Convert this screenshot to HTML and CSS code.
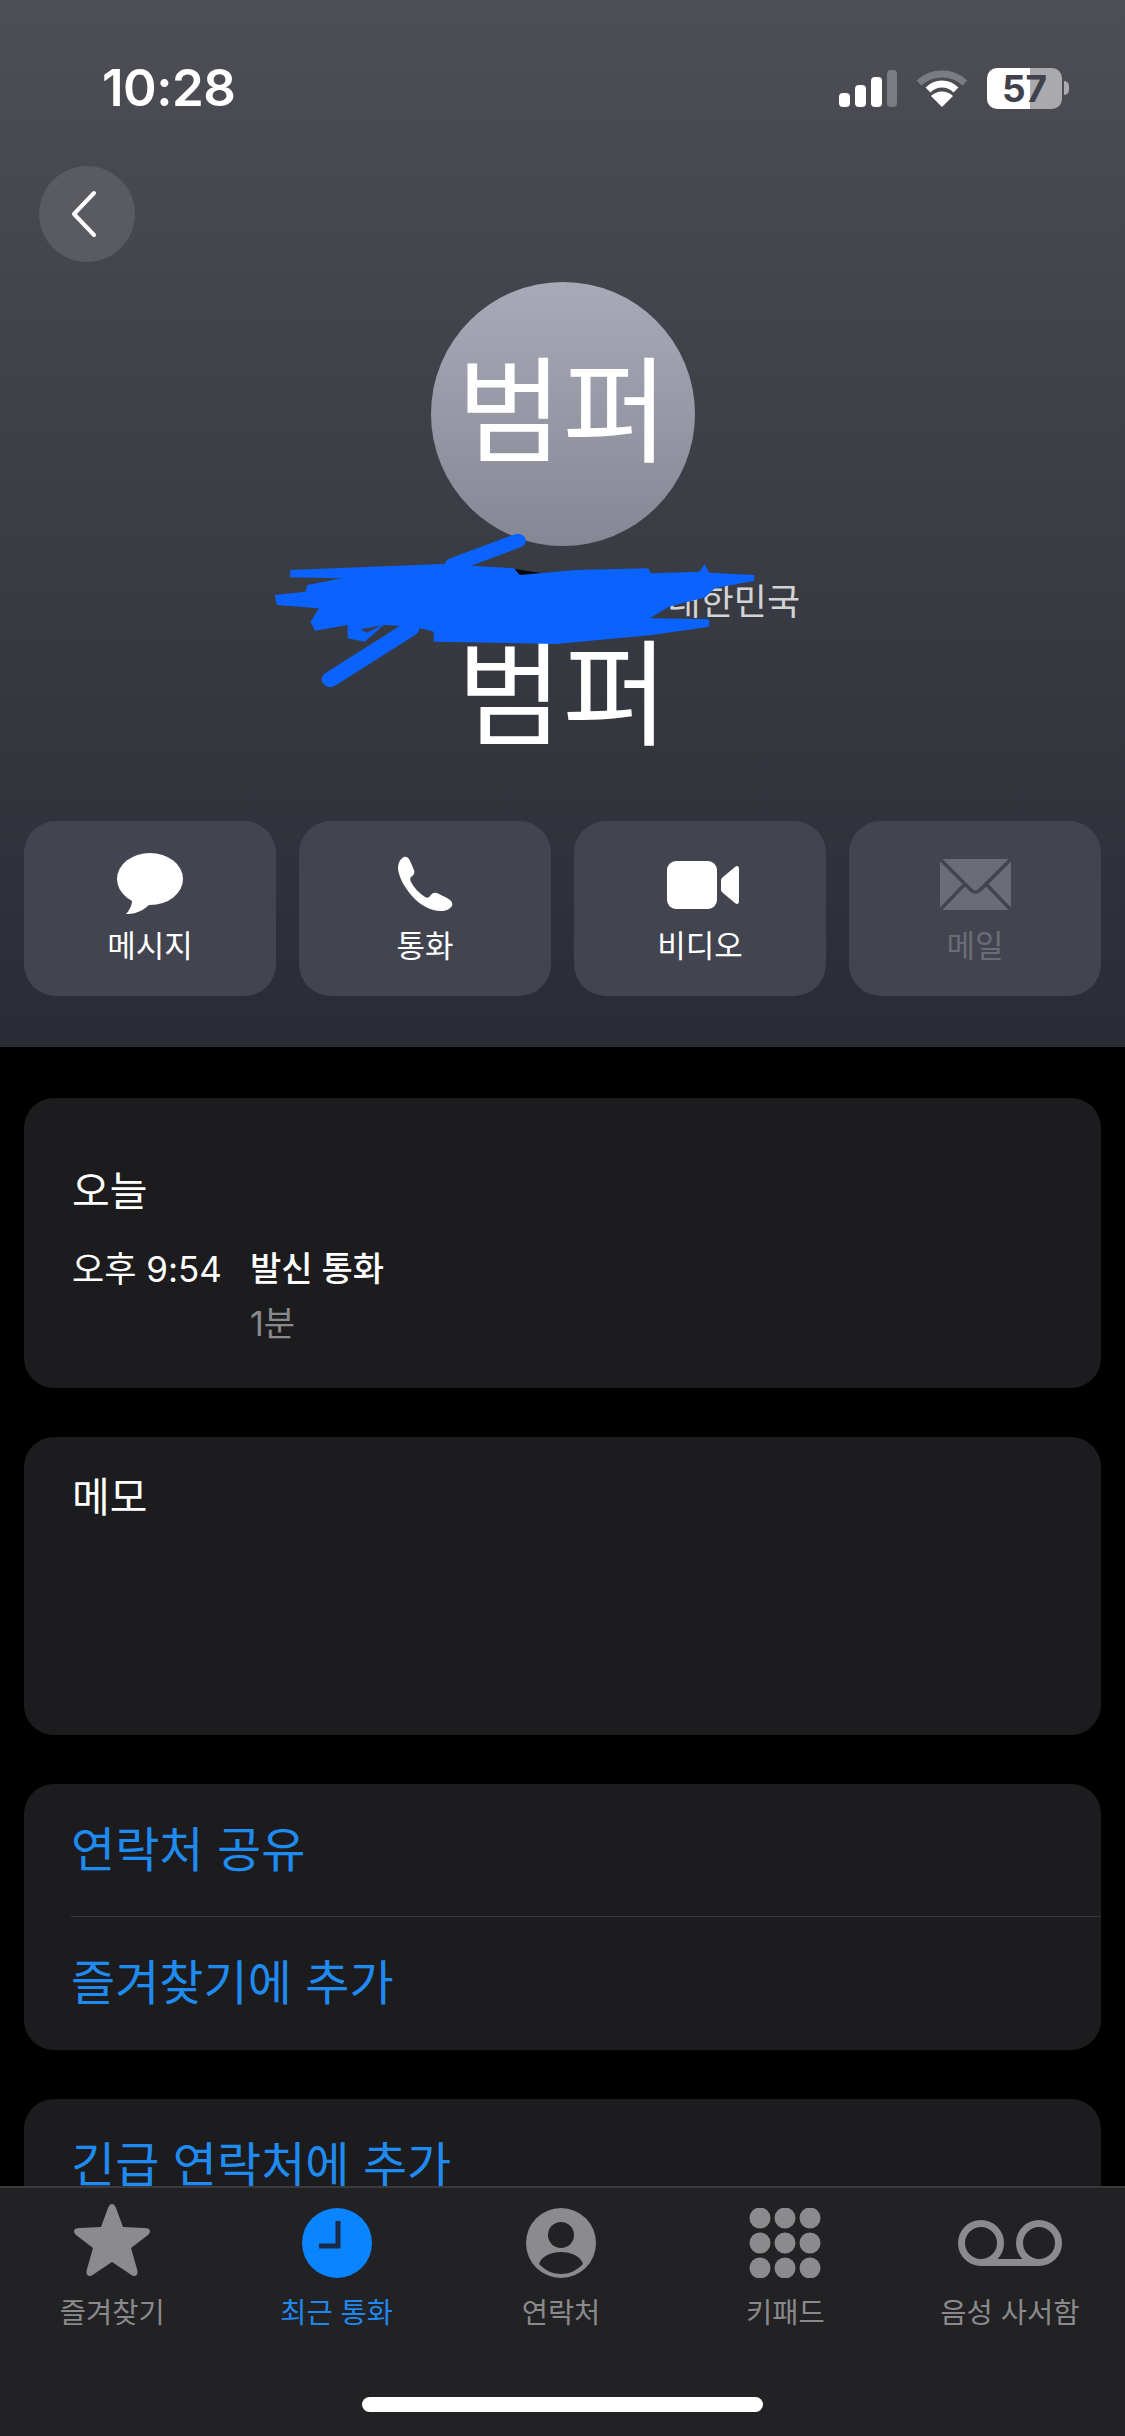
FILE: index.html
```html
<!DOCTYPE html>
<html lang="ko">
<head>
  <meta charset="UTF-8">
  <meta name="viewport" content="width=device-width, initial-scale=1.0">
  <title>범퍼</title>
  <link rel="stylesheet" href="styles.css">
</head>
<body>
  <div class="screen">

    <section class="hero">
      <div class="status">
        <span class="time">10:28</span>
        <div class="status-icons">
          <svg class="signal" viewBox="0 0 58 37">
            <rect x="0" y="23" width="11" height="14" rx="4" fill="#fff"/>
            <rect x="16" y="15" width="11" height="22" rx="4" fill="#fff"/>
            <rect x="32" y="7" width="11" height="30" rx="4" fill="#fff"/>
            <rect x="48" y="0" width="10" height="37" rx="4" fill="#7b7c81"/>
          </svg>
          <svg class="wifi" viewBox="0 0 52 37">
            <path d="M3 13 C16 1 36 1 49 13" fill="none" stroke="#7b7c81" stroke-width="7"/>
            <path d="M12 20 C20 12 32 12 40 20" fill="none" stroke="#fff" stroke-width="7"/>
            <path d="M26 37 L15 26 C21 20 31 20 37 26 Z" fill="#fff"/>
          </svg>
          <div class="battery">
            <div class="battery-body">
              <span class="battery-text">57</span>
            </div>
            <span class="battery-nub"></span>
          </div>
        </div>
      </div>

      <button class="back">
        <svg viewBox="0 0 30 48" width="30" height="48">
          <path d="M25 3 L5 24 L25 45" fill="none" stroke="#fff" stroke-width="4" stroke-linecap="round" stroke-linejoin="round"/>
        </svg>
      </button>

      <div class="avatar">범퍼</div>
      <div class="location">대한민국</div>
      <h1 class="name">범퍼</h1>

      <svg class="scribble" viewBox="0 0 1568 1560" preserveAspectRatio="none">
        <path d="M690 935 L790 952" stroke="#05070f" stroke-width="16" fill="none"/>
        <path d="M105 930 L500 912 L690 925 L705 945 L850 930 L1040 925 L1048 940 L1175 935 L1188 912 L1200 938 L1318 945 L1318 962 L1215 985 L1190 1012 L1095 1040 L1045 1075 L1200 1078 L1200 1100 L1050 1125 L800 1152 L480 1145 L480 1115 L430 1100 L350 1095 L300 1145 L255 1135 L255 1095 L170 1112 L158 1085 L180 1045 L70 1035 L65 1005 L145 995 L150 975 L240 955 L105 952 Z" fill="#0a62ff"/>
        <path d="M530 915 L700 842" stroke="#0a62ff" stroke-width="42" stroke-linecap="round" fill="none"/>
        <path d="M210 1258 L420 1105" stroke="#0a62ff" stroke-width="46" stroke-linecap="round" fill="none"/>
        <path d="M290 1108 L345 1096 L305 1118 Z" fill="#3a3c46"/>
      </svg>

      <div class="actions">
        <div class="action">
          <svg class="ic-msg" viewBox="0 0 66 62">
            <ellipse cx="33" cy="26" rx="33" ry="26" fill="#fff"/>
            <path d="M15 42 C16 51 13 57 9 61 C18 62 29 56 34 50 Z" fill="#fff"/>
          </svg>
          <span>메시지</span>
        </div>
        <div class="action">
          <svg class="ic-phone" viewBox="0 0 55 55">
            <path d="M6 1 C9 0 11 2 13 7 L16 14 C17 17 16 19 13 21 C12 22 12 24 13 26 C16 32 21 37 27 41 C29 42 31 42 32 40 C34 37 36 36 39 37 L49 42 C54 45 55 47 54 50 C52 53 48 55 43 55 C33 55 22 49 14 40 C6 31 1 21 0 13 C0 7 2 3 6 1 Z" fill="#fff"/>
          </svg>
          <span>통화</span>
        </div>
        <div class="action">
          <svg class="ic-video" viewBox="0 0 72 48">
            <rect x="0" y="0" width="50" height="48" rx="9" fill="#fff"/>
            <path d="M56 16 L68 6 C70 4 72 5 72 8 L72 40 C72 43 70 44 68 42 L56 32 C55 31 54 30 54 29 L54 19 C54 18 55 17 56 16 Z" fill="#fff"/>
          </svg>
          <span>비디오</span>
        </div>
        <div class="action off">
          <svg class="ic-mail" viewBox="0 0 71 51">
            <rect x="0" y="0" width="71" height="51" rx="3" fill="#6a6c76"/>
            <path d="M0 0 L31 31 C34 34 37 34 40 31 L71 0" fill="none" stroke="#42444f" stroke-width="3.5"/>
            <path d="M0 51 L25 25 M71 51 L46 25" fill="none" stroke="#42444f" stroke-width="3.5"/>
          </svg>
          <span>메일</span>
        </div>
      </div>
    </section>

    <section class="content">
      <div class="card history">
        <div class="day">오늘</div>
        <div class="call">
          <span class="call-time">오후 9:54</span>
          <div>
            <div class="call-type">발신 통화</div>
            <div class="call-len">1분</div>
          </div>
        </div>
      </div>

      <div class="card memo">메모</div>

      <div class="card links">
        <div class="link">연락처 공유</div>
        <div class="link">즐겨찾기에 추가</div>
      </div>

      <div class="card links">
        <div class="link">긴급 연락처에 추가</div>
      </div>
    </section>

    <nav class="tabbar">
      <div class="tab">
        <svg class="tab-icon star" width="78" height="75" viewBox="0 0 78 75">
          <path d="M39 1 C41 1 42 3 43 5 L50 24 L71 25 C77 25 79 28 75 32 L58 45 L64 66 C66 73 62 75 57 71 L39 59 L21 71 C16 75 12 73 14 66 L20 45 L3 32 C-1 28 1 25 7 25 L28 24 L35 5 C36 3 37 1 39 1 Z" fill="#8b8b8d"/>
        </svg>
        <span>즐겨찾기</span>
      </div>
      <div class="tab on">
        <svg class="tab-icon" width="70" height="70" viewBox="0 0 70 70">
          <circle cx="35" cy="35" r="35" fill="#0a84ff"/>
          <path d="M36 13 L36 38 L17 38" fill="none" stroke="#1b2b45" stroke-width="5"/>
        </svg>
        <span>최근 통화</span>
      </div>
      <div class="tab">
        <svg class="tab-icon" width="70" height="70" viewBox="0 0 70 70">
          <circle cx="35" cy="35" r="35" fill="#8b8b8d"/>
          <circle cx="35" cy="27" r="13" fill="#222224"/>
          <path d="M13 56 C18 40 52 40 57 56 C50 63 43 66 35 66 C27 66 20 63 13 56 Z" fill="#222224"/>
        </svg>
        <span>연락처</span>
      </div>
      <div class="tab">
        <svg class="tab-icon" width="72" height="70" viewBox="0 0 72 70" fill="#8b8b8d">
          <circle cx="11" cy="10" r="10.5"/><circle cx="36" cy="10" r="10.5"/><circle cx="61" cy="10" r="10.5"/>
          <circle cx="11" cy="35" r="10.5"/><circle cx="36" cy="35" r="10.5"/><circle cx="61" cy="35" r="10.5"/>
          <circle cx="11" cy="60" r="10.5"/><circle cx="36" cy="60" r="10.5"/><circle cx="61" cy="60" r="10.5"/>
        </svg>
        <span>키패드</span>
      </div>
      <div class="tab">
        <svg class="tab-icon vm" width="104" height="46" viewBox="0 0 104 46">
          <circle cx="23" cy="23" r="19.5" fill="none" stroke="#8b8b8d" stroke-width="7"/>
          <circle cx="81" cy="23" r="19.5" fill="none" stroke="#8b8b8d" stroke-width="7"/>
          <path d="M23 42.5 L81 42.5" stroke="#8b8b8d" stroke-width="7"/>
        </svg>
        <span>음성 사서함</span>
      </div>
      <div class="home-bar"></div>
    </nav>

  </div>
</body>
</html>
```

FILE: styles.css
```css
* {
  box-sizing: border-box;
}

body {
  margin: 0;
  background-color: #000;
  color: #fff;
  font-family: Inter, "Noto Sans CJK KR", sans-serif;
}

.screen {
  position: relative;
  width: 1125px;
  height: 2436px;
  overflow: hidden;
  background-color: #000;
}

/* top part */
.hero {
  position: relative;
  height: 1047px;
  background: linear-gradient(#4e4f55, #42444c 30%, #2a2c35);
}

.status {
  display: flex;
  justify-content: space-between;
  align-items: center;
  height: 166px;
  padding: 10px 56px 0 102px;
}

.time {
  font-size: 51px;
  font-weight: 600;
  line-height: 60px;
  letter-spacing: -0.5px;
}

.status-icons {
  display: flex;
  align-items: center;
  gap: 19px;
}

.signal {
  width: 58px;
  height: 37px;
}

.wifi {
  width: 52px;
  height: 37px;
}

.battery {
  display: flex;
  align-items: center;
  gap: 2px;
}

.battery-body {
  display: flex;
  justify-content: center;
  align-items: center;
  width: 75px;
  height: 41px;
  border-radius: 10px;
  background: linear-gradient(90deg, #fff 57%, #a9a9ae 57%);
}

.battery-text {
  color: #40414a;
  font-size: 37px;
  font-weight: 700;
  line-height: 41px;
}

.battery-nub {
  width: 5px;
  height: 14px;
  border-radius: 0 5px 5px 0;
  background-color: #a9a9ae;
}

.back {
  display: flex;
  justify-content: center;
  align-items: center;
  width: 96px;
  height: 96px;
  margin: 0 0 0 39px;
  padding: 0 6px 0 0;
  border: none;
  border-radius: 50%;
  background-color: #5a5b61;
}

.avatar {
  display: flex;
  justify-content: center;
  align-items: center;
  width: 264px;
  height: 264px;
  margin: 20px auto 0;
  padding-bottom: 5px;
  border-radius: 50%;
  background: linear-gradient(#a8abb7, #858894);
  font-size: 115px;
  line-height: 1;
  white-space: nowrap;
}

.location {
  margin-top: 34px;
  padding-right: 325px;
  color: #d3d3d6;
  font-size: 36px;
  line-height: 44px;
  text-align: right;
}

.name {
  margin: 6px 0 0;
  font-size: 115px;
  font-weight: 400;
  line-height: 130px;
  text-align: center;
}

.scribble {
  position: absolute;
  top: 260px;
  left: 250px;
  width: 600px;
  height: 520px;
}

.actions {
  display: flex;
  gap: 23px;
  margin-top: 61px;
  padding: 0 24px;
}

.action {
  display: flex;
  flex: 1;
  flex-direction: column;
  align-items: center;
  height: 175px;
  border-radius: 32px;
  background-color: #42444f;
  font-size: 31px;
}

.action svg {
  display: block;
  height: 62px;
  margin-top: 32px;
}

.action span {
  margin-top: 8px;
  line-height: 46px;
}

.action.off span {
  color: #6a6c76;
}

.ic-msg {
  width: 66px;
}

.ic-phone {
  width: 55px;
  padding: 3px 0 4px;
}

.action .ic-video {
  width: 72px;
  margin-left: 5px;
  padding: 8px 0 6px;
}

.ic-mail {
  width: 71px;
  padding: 6px 0 5px;
}

/* cards */
.content {
  display: flex;
  flex-direction: column;
  gap: 49px;
  padding: 51px 24px 0;
}

.card {
  border-radius: 30px;
  background-color: #1c1c1e;
}

.history {
  height: 290px;
  padding: 65px 48px 0;
}

.day {
  font-size: 41px;
  line-height: 56px;
}

.call {
  display: flex;
  gap: 28px;
  margin-top: 25px;
  font-size: 35px;
  line-height: 50px;
}

.call-time {
  font-size: 35px;
}

.call-type {
  font-size: 34px;
  font-weight: 500;
}

.call-len {
  margin-top: 5px;
  color: #8a8a8e;
  font-size: 34px;
}

.memo {
  height: 298px;
  padding: 32px 48px 0;
  font-size: 41px;
  line-height: 56px;
}

.links {
  padding-left: 47px;
  color: #1f8bf0;
  font-size: 48px;
}

.link {
  height: 132px;
  padding-top: 31px;
  line-height: 70px;
}

.link + .link {
  height: 134px;
  border-top: 1px solid #3a3a3c;
}

/* bottom tabs */
.tabbar {
  position: absolute;
  bottom: 0;
  left: 0;
  display: flex;
  width: 100%;
  height: 250px;
  padding-right: 3px;
  border-top: 2px solid #3a3a3c;
  background-color: #222224;
}

.tab {
  display: flex;
  flex: 1;
  flex-direction: column;
  align-items: center;
  color: #8a8a8c;
  font-size: 28.5px;
  line-height: 40px;
}

.tab-icon {
  display: block;
  margin-top: 20px;
  margin-bottom: 2px;
}

.tab span {
  margin-top: 13px;
}

.tab .star {
  margin-top: 15px;
  margin-bottom: 2px;
}

.tab .vm {
  margin-top: 32px;
  margin-bottom: 14px;
}

.tab.on {
  color: #1f88ee;
}

.home-bar {
  position: absolute;
  bottom: 24px;
  left: 362px;
  width: 401px;
  height: 15px;
  border-radius: 8px;
  background-color: #fff;
}
```
